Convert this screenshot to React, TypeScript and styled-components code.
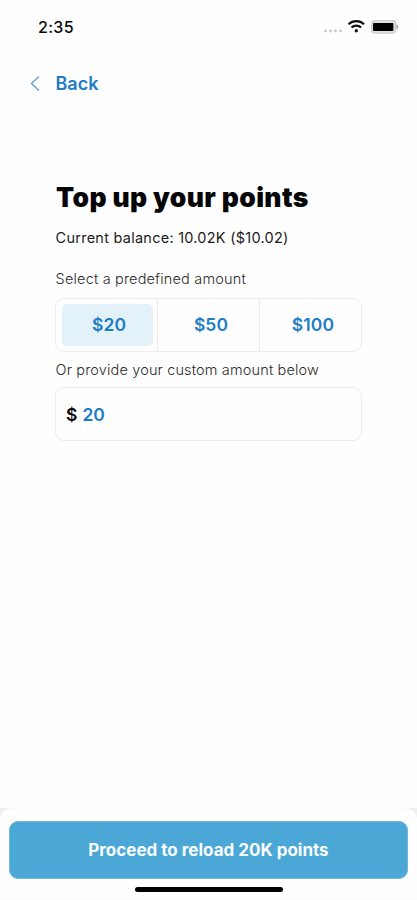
import React, { useState } from "react";
import styled, { createGlobalStyle } from "styled-components";

const GlobalStyle = createGlobalStyle`
  * { box-sizing: border-box; }
  body { margin: 0; background: #fefefe; }
  button, input { font: inherit; }
`;

const Screen = styled.div`
  width: 417px;
  height: 900px;
  display: flex;
  flex-direction: column;
  overflow: hidden;
  background: #fefefe;
  color: #050505;
  font-family: Inter, "Liberation Sans", sans-serif;
`;

const StatusBar = styled.header`
  height: 54px;
  flex: none;
  display: flex;
  align-items: center;
  justify-content: space-between;
  padding: 0 18px 0 38px;
`;

const Clock = styled.span`
  font-size: 16px;
  font-weight: 500;
  letter-spacing: 0.3px;
  line-height: 20px;
`;

const StatusIcons = styled.svg`
  display: block;
`;

const BackButton = styled.button`
  display: flex;
  align-items: center;
  align-self: flex-start;
  gap: 14.5px;
  height: 24px;
  margin: 18px 0 0 29px;
  padding: 0;
  border: 0;
  background: none;
  color: #207dc5;
  font-size: 18px;
  font-weight: 600;
  line-height: 24px;
`;

const Content = styled.main`
  flex: 1;
  display: flex;
  flex-direction: column;
  padding: 84px 55px 0;
`;

const Title = styled.h1`
  margin: 0 0 0 1px;
  font-size: 26.5px;
  font-weight: 900;
  line-height: 34px;
  letter-spacing: 0.35px;
  white-space: nowrap;
`;

const Copy = styled.p<{ $muted?: boolean; $top: number; $spacing: number }>`
  margin: ${(p) => p.$top}px 0 0 0.6px;
  font-size: 14.5px;
  font-weight: ${(p) => (p.$muted ? 300 : 400)};
  line-height: 20px;
  letter-spacing: ${(p) => p.$spacing}px;
  color: ${(p) => (p.$muted ? "#2c2c2c" : "#1c1c1c")};
  white-space: nowrap;
`;

const AmountGroup = styled.div`
  display: grid;
  grid-template-columns: 101px 102px 1fr;
  height: 54px;
  margin-top: 9px;
  border: 1.5px solid #ededed;
  border-radius: 9px;
`;

const AmountCell = styled.div`
  display: flex;
  padding: 5px 4px 5px 6px;
  & + & {
    border-left: 1px solid #ebebeb;
  }
`;

const AmountButton = styled.button<{ $selected: boolean }>`
  flex: 1;
  padding: 0 0 1px 3px;
  border: 0;
  border-radius: 5px;
  background: ${(p) => (p.$selected ? "#e3f1f9" : "transparent")};
  color: #207dc5;
  font-size: 17.5px;
  font-weight: 600;
  letter-spacing: 0.1px;
`;

const CustomField = styled.label`
  display: flex;
  align-items: center;
  gap: 5px;
  height: 54px;
  margin-top: 7px;
  padding: 0 10px;
  border: 1.5px solid #ededed;
  border-radius: 9px;
  font-size: 17.5px;
  font-weight: 600;
`;

const CustomInput = styled.input`
  width: 200px;
  padding: 0;
  border: 0;
  outline: 0;
  background: transparent;
  color: #207dc5;
`;

const FooterBackdrop = styled.div`
  flex: none;
  height: 92px;
  background: linear-gradient(#eeeeee, #fefefe 30px);
`;

const Footer = styled.footer`
  height: 92px;
  display: flex;
  flex-direction: column;
  align-items: center;
  padding: 12px 9px 0;
  border-top: 1px solid #fafafa;
  border-bottom: 1px solid #f8f8f8;
  border-radius: 12px 12px 0 0;
  background: #fefefe;
`;

const ProceedButton = styled.button`
  width: 399px;
  height: 58px;
  flex: none;
  border: 1px solid #72b9dc;
  border-radius: 9px;
  background: #4ba7d6;
  color: #fafdff;
  font-size: 17px;
  font-weight: 700;
`;

const HomeIndicator = styled.div`
  width: 148px;
  height: 5px;
  flex: none;
  margin: 8px 0 0 1px;
  border-radius: 3px;
  background: #000;
`;

const amounts = ["20", "50", "100"];

export default function App() {
  const [amount, setAmount] = useState("20");

  return (
    <Screen>
      <GlobalStyle />
      <StatusBar>
        <Clock>2:35</Clock>
        <StatusIcons width="76" height="20" viewBox="0 0 76 20" fill="none">
          <g fill="#c9c9c9">
            <circle cx="2.500" cy="14" r="1.400" />
            <circle cx="7.500" cy="14" r="1.400" />
            <circle cx="12.500" cy="14" r="1.400" />
            <circle cx="17.500" cy="14" r="1.400" />
          </g>
          <g stroke="#111" strokeWidth="2.200">
            <path d="M25.500 7.200a11.300 11.300 0 0 1 15.600 0" />
            <path d="M28.500 10.500a7 7 0 0 1 9.600 0" />
          </g>
          <circle cx="33.300" cy="13.700" r="1.700" fill="#111" />
          <rect x="48.700" y="3.700" width="24" height="12.400" rx="3.400" fill="#e4e4e4" stroke="#cecece" strokeWidth="1.400" />
          <rect x="50" y="6" width="20.400" height="8" rx="0.800" fill="#000" />
          <path d="M73.500 7.600c2.300 .8 2.300 3.800 0 4.600z" fill="#999" />
        </StatusIcons>
      </StatusBar>
      <BackButton>
        <svg width="12" height="18" viewBox="0 0 12 18" fill="none">
          <path d="M10 1.500 2.500 8.500l7.500 7" stroke="#6ba2d6" strokeWidth="1.500" />
        </svg>
        Back
      </BackButton>
      <Content>
        <Title>Top up your points</Title>
        <Copy $top={14} $spacing={0.25}>Current balance: 10.02K ($10.02)</Copy>
        <Copy $muted $top={21} $spacing={0.17}>Select a predefined amount</Copy>
        <AmountGroup>
          {amounts.map((value) => (
            <AmountCell key={value}>
              <AmountButton $selected={amount === value} onClick={() => setAmount(value)}>
                ${value}
              </AmountButton>
            </AmountCell>
          ))}
        </AmountGroup>
        <Copy $muted $top={8} $spacing={0.15}>Or provide your custom amount below</Copy>
        <CustomField>
          $
          <CustomInput value={amount} onChange={(e) => setAmount(e.target.value)} />
        </CustomField>
      </Content>
      <FooterBackdrop>
        <Footer>
          <ProceedButton>Proceed to reload 20K points</ProceedButton>
          <HomeIndicator />
        </Footer>
      </FooterBackdrop>
    </Screen>
  );
}
